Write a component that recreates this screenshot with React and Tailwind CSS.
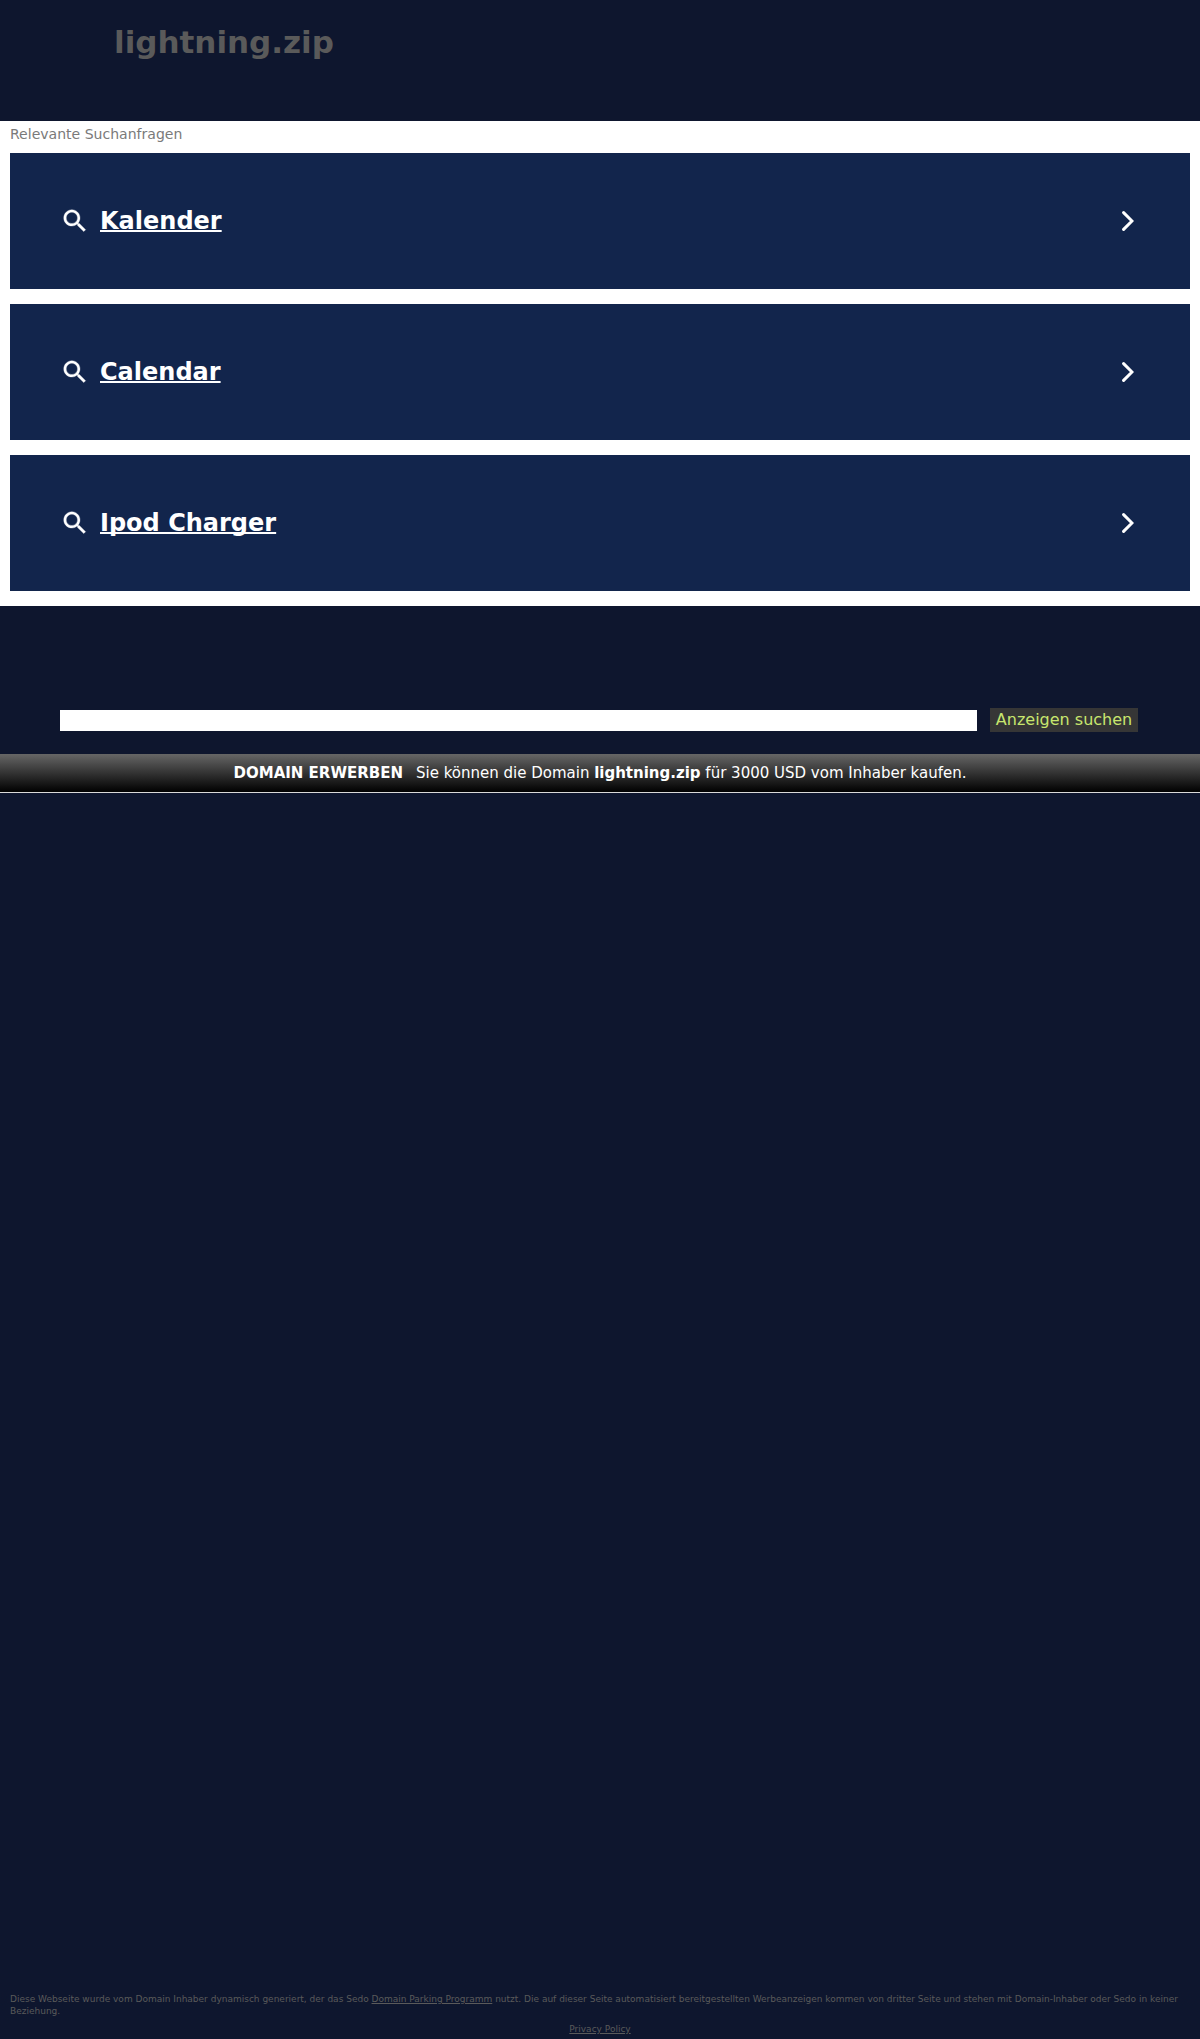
const searches = ["Kalender", "Calendar", "Ipod Charger"];

function SearchIcon() {
  return (
    <svg className="size-[30px] shrink-0" viewBox="0 0 24 24" fill="#fff" stroke="#fff" strokeWidth="0.25">
      <path d="M15.5 14h-.79l-.28-.27C15.41 12.59 16 11.11 16 9.5 16 5.91 13.09 3 9.5 3S3 5.91 3 9.5 5.91 16 9.5 16c1.61 0 3.09-.59 4.23-1.57l.27.28v.79l5 4.99L20.49 19l-4.99-5zm-6 0C7.01 14 5 11.99 5 9.5S7.01 5 9.5 5 14 7.01 14 9.5 11.99 14 9.5 14z" />
    </svg>
  );
}

function ChevronIcon() {
  return (
    <svg className="h-5 w-3 shrink-0" viewBox="0 0 12 20" fill="none" stroke="#fff" strokeWidth="3" strokeLinecap="round">
      <path d="M1.6 1.6L10 10L1.6 18.4" />
    </svg>
  );
}

export default function App() {
  return (
    <div className="flex h-[2039px] flex-col bg-[#0e162e] font-['DejaVu_Sans',sans-serif]">
      <header className="h-[121px] pt-[24px] pl-[114px]">
        <h1 className="text-[31px] leading-[36px] font-bold text-[#5a5a5a]">lightning.zip</h1>
      </header>
      <main className="h-[485px] bg-white px-[10px]">
        <p className="h-8 pt-[5px] text-[14.04px] leading-[17px] text-[#7a7a7a]">Relevante Suchanfragen</p>
        <div className="flex flex-col gap-[15px]">
          {searches.map((name) => (
            <a key={name} href="#" className="flex h-[136px] items-center bg-[#12254c] pr-[56px] pl-[50px] text-white">
              <SearchIcon />
              <span className="ml-[10px] flex-1 text-[24px] leading-7 font-bold underline underline-offset-1 [text-decoration-skip-ink:none]">{name}</span>
              <ChevronIcon />
            </a>
          ))}
        </div>
      </main>
      <form className="mt-[102px] flex h-6 items-center px-[60px]">
        <input className="h-[21px] w-[917px] bg-white outline-none" />
        <button type="button" className="ml-[13px] h-6 w-[148px] bg-[#363636] text-[16px] leading-6 whitespace-nowrap text-[#c8e66e]">
          Anzeigen suchen
        </button>
      </form>
      <div className="mt-[22px] flex h-[39px] justify-center border-b border-[#d9d9d9] bg-[linear-gradient(to_bottom,#666,#000)] pt-[10px] text-[15px] leading-[19px] text-white">
        <b className="mr-[13px]">DOMAIN ERWERBEN</b>
        <span>
          Sie können die Domain <b>lightning.zip</b> für 3000 USD vom Inhaber kaufen.
        </span>
      </div>
      <footer className="mt-auto h-[46px] px-[10px] text-[9.016px] leading-3 text-[#5a5a5a]">
        <p>
          Diese Webseite wurde vom Domain Inhaber dynamisch generiert, der das Sedo{" "}
          <a href="#" className="underline">Domain Parking Programm</a> nutzt. Die auf dieser Seite automatisiert
          bereitgestellten Werbeanzeigen kommen von dritter Seite und stehen mit Domain-Inhaber oder Sedo in keiner
          Beziehung.
        </p>
        <p className="mt-[6px] text-center">
          <a href="#" className="underline">Privacy Policy</a>
        </p>
      </footer>
    </div>
  );
}
